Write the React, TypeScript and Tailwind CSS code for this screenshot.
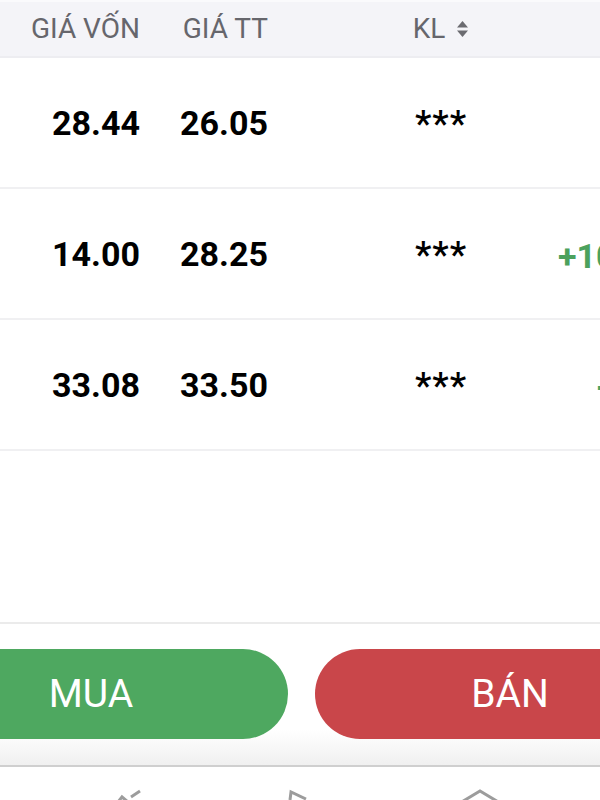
import React from "react";

const rows = [
  { cost: "28.44", price: "26.05", pct: "-8.40%", up: false },
  { cost: "14.00", price: "28.25", pct: "+101.79%", up: true },
  { cost: "33.08", price: "33.50", pct: "+1.27%", up: true },
];

const SortIcon = () => (
  <svg width="13" height="20" viewBox="0 0 13 20" className="ml-[11px]">
    <path d="M6.5 2 L12 8.5 H1 Z" fill="#6b6b70" />
    <path d="M6.5 18 L12 11.5 H1 Z" fill="#6b6b70" />
  </svg>
);

export default function App() {
  return (
    <div
      className="w-[600px] h-[800px] overflow-hidden bg-white flex flex-col"
      style={{ fontFamily: "Roboto, 'Liberation Sans', sans-serif" }}
    >
      {/* Header */}
      <div className="h-[58px] shrink-0 bg-[#f4f4f8] border-t-2 border-t-[#fafafc] border-b-2 border-b-[#ededf1] flex items-center text-[28px] text-[#66666c]">
        <div className="w-[140px] shrink-0 text-right">GIÁ VỐN</div>
        <div className="w-[128px] shrink-0 text-right">GIÁ TT</div>
        <div className="w-[120px] ml-[113px] shrink-0 flex items-center justify-center">
          KL
          <SortIcon />
        </div>
      </div>

      {/* Rows */}
      {rows.map((r) => (
        <div
          key={r.cost}
          className="h-[131px] shrink-0 border-b-2 border-[#f0f0f2] flex items-center"
        >
          <div className="w-[140px] shrink-0 text-right text-[34px] font-bold text-black pt-[2px]">
            {r.cost}
          </div>
          <div className="w-[128px] shrink-0 text-right text-[34px] font-bold text-black pt-[2px]">
            {r.price}
          </div>
          <div className="w-[120px] ml-[113px] shrink-0 text-center text-[37px] font-medium tracking-[1px] text-black leading-none pt-[14px] -translate-y-[6px]">
            ***
          </div>
          <div
            className={
              "w-[208px] shrink-0 text-right text-[34px] font-bold whitespace-nowrap pt-[6px] " +
              (r.up ? "text-[#4ca15d]" : "text-[#c23a44]")
            }
          >
            {r.pct}
          </div>
        </div>
      ))}

      <div className="flex-1" />

      {/* Action bar */}
      <div className="h-[145px] shrink-0 border-t-2 border-[#ebebeb] bg-gradient-to-b from-white from-75% to-[#f0f0f0] border-b-2 border-b-[#cfcfcf] pt-[25px]">
        <div className="flex gap-[27px] -ml-[106px]">
          <button className="w-[394px] h-[90px] shrink-0 rounded-full bg-[#4ea860] text-white text-[39px] flex items-center justify-center">
            MUA
          </button>
          <button className="w-[390px] h-[90px] shrink-0 rounded-full bg-[#c9464a] text-white text-[39px] flex items-center justify-center">
            BÁN
          </button>
        </div>
      </div>

      {/* Bottom nav (cut off) */}
      <div className="h-[33px] shrink-0 bg-white relative overflow-hidden">
        <svg
          width="600"
          height="33"
          viewBox="0 0 600 33"
          className="absolute left-0 top-0"
          fill="none"
          stroke="#9c9c9c"
          strokeWidth="3"
        >
          <path d="M114 40 L122 30 L128 35" />
          <path d="M131 30 L140 24" />
          <path d="M290 33 L291 25 L306 32" />
          <path d="M460 36 L480 24 L500 36" />
        </svg>
      </div>
    </div>
  );
}
